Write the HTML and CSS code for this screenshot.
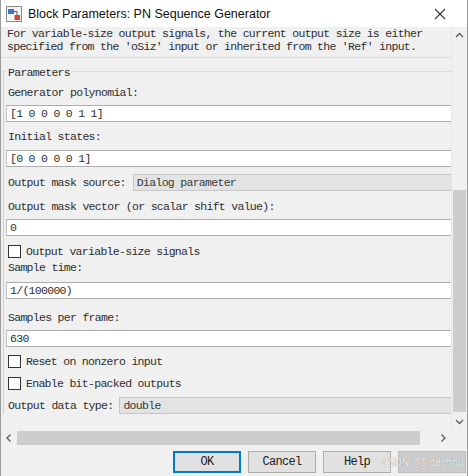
FILE: index.html
```html
<!DOCTYPE html>
<html>
<head>
<meta charset="utf-8">
<link rel="stylesheet" href="styles.css">
</head>
<body>
<div class="dialog">
  <div class="titlebar">
    <svg class="appicon" width="16" height="16" viewBox="0 0 16 16">
      <rect x="0.5" y="0.5" width="15" height="15" fill="#f4f4f4" stroke="#8a8a8a"/>
      <rect x="2" y="3" width="6" height="5" fill="#3a78c2"/>
      <path d="M8 5.5 H11 V9" fill="none" stroke="#555" stroke-width="1"/>
      <rect x="8.5" y="9" width="5.5" height="5" fill="#d9452f"/>
    </svg>
    <span class="title">Block Parameters: PN Sequence Generator</span>
    <svg class="close" width="12" height="12" viewBox="0 0 12 12">
      <path d="M1 1 L11 11 M11 1 L1 11" stroke="#333" stroke-width="1.1" fill="none"/>
    </svg>
  </div>
  <div class="main">
    <div class="content">
      <div class="desc">For variable-size output signals, the current output size is either<br>specified from the 'oSiz' input or inherited from the 'Ref' input.</div>
      <div class="group">
        <div class="legend">Parameters</div>
        <div class="lbl mt6">Generator polynomial:</div>
        <div class="field mt5">[1 0 0 0 0 1 1]</div>
        <div class="lbl mt8">Initial states:</div>
        <div class="field mt6">[0 0 0 0 0 1]</div>
        <div class="row mt7">
          <span class="rowlbl">Output mask source:</span>
          <div class="popup pop1">Dialog parameter</div>
        </div>
        <div class="lbl mt9">Output mask vector (or scalar shift value):</div>
        <div class="field mt5">0</div>
        <div class="check mt8"><span class="box"></span><span>Output variable-size signals</span></div>
        <div class="lbl mt3">Sample time:</div>
        <div class="field mt7">1/(100000)</div>
        <div class="lbl mt12">Samples per frame:</div>
        <div class="field mt5">630</div>
        <div class="check mt7"><span class="box"></span><span>Reset on nonzero input</span></div>
        <div class="check mt8"><span class="box"></span><span>Enable bit-packed outputs</span></div>
        <div class="row mt7">
          <span class="rowlbl">Output data type:</span>
          <div class="popup pop2">double</div>
        </div>
      </div>
    </div>
    <div class="vscroll">
      <svg class="arrow" width="15" height="17" viewBox="0 0 15 17">
        <path d="M4 10 L7.5 6.5 L11 10" stroke="#606060" stroke-width="1.4" fill="none"/>
      </svg>
      <div class="vtrack"><div class="vthumb"></div></div>
      <svg class="arrow" width="15" height="17" viewBox="0 0 15 17">
        <path d="M4 7 L7.5 10.5 L11 7" stroke="#606060" stroke-width="1.4" fill="none"/>
      </svg>
    </div>
  </div>
  <div class="hscroll">
    <svg class="harrow" width="16" height="16" viewBox="0 0 16 16">
      <path d="M9.5 4.5 L6 8 L9.5 11.5" stroke="#606060" stroke-width="1.4" fill="none"/>
    </svg>
    <div class="htrack"><div class="hthumb"></div></div>
    <svg class="harrow" width="16" height="16" viewBox="0 0 16 16">
      <path d="M6.5 4.5 L10 8 L6.5 11.5" stroke="#606060" stroke-width="1.4" fill="none"/>
    </svg>
    <div class="corner"></div>
  </div>
  <div class="buttons">
    <div class="btn default">OK</div>
    <div class="btn">Cancel</div>
    <div class="btn">Help</div>
    <div class="btn disabled"></div>
    <span class="watermark">CSDN @Sidechou</span>
  </div>
</div>
</body>
</html>
```

FILE: styles.css
```css
html, body {
  margin: 0;
  padding: 0;
  background: #f0f0f0;
}
body {
  width: 468px;
  height: 476px;
  overflow: hidden;
  font-family: "Liberation Mono", "DejaVu Sans Mono", monospace;
  font-size: 11.5px;
  letter-spacing: -0.7px;
  color: #2e2e2e;
}
.dialog {
  position: relative;
  width: 468px;
  height: 476px;
  box-sizing: border-box;
  border-left: 1px solid #9a9a9a;
  border-right: 1px solid #9a9a9a;
  display: flex;
  flex-direction: column;
  background: #f0f0f0;
}
.titlebar {
  height: 27px;
  flex: none;
  background: #ffffff;
  display: flex;
  align-items: center;
  padding-left: 5px;
  box-sizing: border-box;
}
.appicon { flex: none; margin-top: 1px; }
.title {
  font-family: "Liberation Sans", Arial, sans-serif;
  font-size: 12.5px;
  letter-spacing: 0;
  color: #111;
  margin-left: 6px;
  flex: 1;
}
.close { margin-right: 21px; }
.main {
  height: 403px;
  flex: none;
  display: flex;
}
.content {
  flex: 1;
  overflow: hidden;
}
.desc {
  line-height: 13px;
  padding: 0 0 4px 6px;
  border-bottom: 1px solid #dcdcdc;
  white-space: nowrap;
}
.group {
  margin: 13px 0 0 2px;
  border-top: 1px solid #dcdcdc;
  border-left: 1px solid #d0d0d0;
  display: flex;
  flex-direction: column;
}
.legend {
  align-self: flex-start;
  margin: -6px 0 0 2px;
  padding: 0 2px;
  line-height: 14px;
  height: 14px;
  background: #f0f0f0;
}
.lbl {
  line-height: 14px;
  height: 14px;
  padding-left: 4px;
  white-space: nowrap;
}
.field {
  height: 17px;
  box-sizing: border-box;
  margin-left: 2px;
  background: #ffffff;
  border: 1px solid #adadad;
  border-right: none;
  border-left-color: #c0c0c0;
  padding-left: 3px;
  line-height: 15px;
  white-space: nowrap;
}
.row {
  display: flex;
  align-items: center;
  height: 17px;
  padding-left: 4px;
}
.rowlbl { white-space: nowrap; flex: none; }
.popup {
  flex: 1;
  height: 17px;
  box-sizing: border-box;
  background: #e3e3e3;
  border: 1px solid #c6c6c6;
  border-right: none;
  padding-left: 3px;
  line-height: 15px;
  color: #3a3a3a;
  white-space: nowrap;
}
.pop1 { margin-left: 7px; }
.pop2 { margin-left: 6px; }
.check {
  display: flex;
  align-items: center;
  height: 14px;
  padding-left: 4px;
  white-space: nowrap;
}
.box {
  width: 13px;
  height: 13px;
  box-sizing: border-box;
  border: 1px solid #333;
  background: #fff;
  margin-right: 5px;
  flex: none;
}
.mt3 { margin-top: 3px; }
.mt5 { margin-top: 5px; }
.mt6 { margin-top: 6px; }
.mt7 { margin-top: 7px; }
.mt8 { margin-top: 8px; }
.mt9 { margin-top: 9px; }
.mt12 { margin-top: 12px; }
.vscroll {
  width: 15px;
  flex: none;
  display: flex;
  flex-direction: column;
  background: #f0f0f0;
  border-left: 1px solid #e6e6e6;
}
.arrow { flex: none; display: block; }
.vtrack {
  flex: 1;
  display: flex;
  flex-direction: column;
  padding-top: 146px;
}
.vthumb {
  width: 13px;
  margin-left: 1px;
  height: 222px;
  background: #cdcdcd;
}
.hscroll {
  height: 16px;
  flex: none;
  display: flex;
  align-items: center;
  background: #f0f0f0;
}
.harrow { flex: none; display: block; }
.htrack {
  flex: 1;
  height: 16px;
  display: flex;
  align-items: center;
}
.hthumb {
  height: 14px;
  width: 403px;
  background: #cdcdcd;
}
.corner { width: 16px; height: 16px; flex: none; }
.buttons {
  flex: 1;
  display: flex;
  justify-content: flex-end;
  align-items: flex-start;
  gap: 7px;
  padding: 5px 1px 0 0;
  position: relative;
}
.btn {
  width: 68px;
  height: 22px;
  box-sizing: border-box;
  background: #e1e1e1;
  border: 1px solid #adadad;
  text-align: center;
  line-height: 20px;
  font-size: 12px;
  color: #222;
  white-space: nowrap;
}
.btn.default {
  border: 2px solid #0078d7;
  line-height: 18px;
}
.btn.disabled {
  background: #cccccc;
  border-color: #bfbfbf;
}
.watermark {
  position: absolute;
  right: 3px;
  top: 9px;
  font-family: "Noto Sans", sans-serif;
  font-size: 10px;
  letter-spacing: 0;
  color: #f4f4f4;
  text-shadow: 0 0 1px #7a7a7a;
  white-space: nowrap;
}
```
